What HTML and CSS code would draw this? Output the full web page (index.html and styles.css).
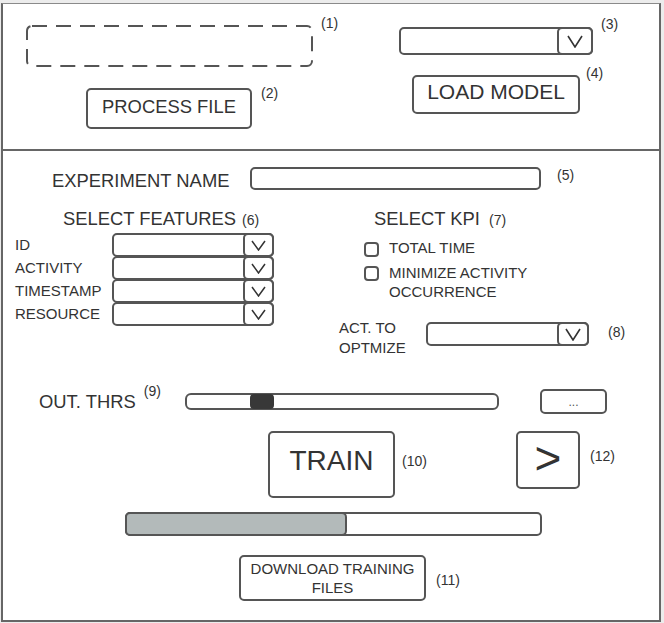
FILE: index.html
```html
<!DOCTYPE html>
<html lang="en">
<head>
  <meta charset="UTF-8">
  <meta name="viewport" content="width=device-width, initial-scale=1.0">
  <title>Training Wireframe</title>
  <link rel="stylesheet" href="styles.css">
</head>
<body>
  <div class="frame">

    <!-- file / model loading -->
    <section class="top">
      <div class="col-file">
        <div class="line">
          <svg class="drop" width="287" height="42" viewBox="0 0 287 42">
            <rect x="1" y="1" width="285" height="40" rx="5" fill="none" stroke="#555" stroke-width="2" stroke-dasharray="15 9"/>
          </svg>
          <span class="note n1">(1)</span>
        </div>
        <div class="line process-line">
          <button class="btn btn-process">PROCESS FILE</button>
          <span class="note n2">(2)</span>
        </div>
      </div>
      <div class="col-model">
        <div class="line">
          <div class="select select-model">
            <span class="vbox"><svg width="16" height="13" viewBox="0 0 16 13"><polyline points="1,1 8,12 15,1" fill="none" stroke="#333" stroke-width="1.6"/></svg></span>
          </div>
          <span class="note n3">(3)</span>
        </div>
        <div class="line load-line">
          <button class="btn btn-load">LOAD MODEL</button>
          <span class="note n4">(4)</span>
        </div>
      </div>
    </section>

    <!-- experiment settings -->
    <section class="main">
      <div class="row exp-row">
        <span class="exp-label">EXPERIMENT NAME</span>
        <div class="field exp-field"></div>
        <span class="note n5">(5)</span>
      </div>

      <div class="row cols-row">
        <div class="col-features">
          <h2 class="heading features-heading">SELECT FEATURES<span class="note n6">(6)</span></h2>
          <div class="feature-list">
            <div class="feature">
              <span class="feature-label">ID</span>
              <div class="select select-feature"><span class="vbox vbox-sm"><svg width="15" height="11" viewBox="0 0 15 11"><polyline points="1,1 7.5,10 14,1" fill="none" stroke="#333" stroke-width="1.5"/></svg></span></div>
            </div>
            <div class="feature">
              <span class="feature-label">ACTIVITY</span>
              <div class="select select-feature"><span class="vbox vbox-sm"><svg width="15" height="11" viewBox="0 0 15 11"><polyline points="1,1 7.5,10 14,1" fill="none" stroke="#333" stroke-width="1.5"/></svg></span></div>
            </div>
            <div class="feature">
              <span class="feature-label">TIMESTAMP</span>
              <div class="select select-feature"><span class="vbox vbox-sm"><svg width="15" height="11" viewBox="0 0 15 11"><polyline points="1,1 7.5,10 14,1" fill="none" stroke="#333" stroke-width="1.5"/></svg></span></div>
            </div>
            <div class="feature">
              <span class="feature-label">RESOURCE</span>
              <div class="select select-feature"><span class="vbox vbox-sm"><svg width="15" height="11" viewBox="0 0 15 11"><polyline points="1,1 7.5,10 14,1" fill="none" stroke="#333" stroke-width="1.5"/></svg></span></div>
            </div>
          </div>
        </div>

        <div class="col-kpi">
          <h2 class="heading kpi-heading">SELECT KPI<span class="note n7">(7)</span></h2>
          <div class="kpi-list">
            <label class="option option-first">
              <span class="check"></span>
              <span class="option-text">TOTAL TIME</span>
            </label>
            <label class="option option-second">
              <span class="check"></span>
              <span class="option-text">MINIMIZE ACTIVITY<br>OCCURRENCE</span>
            </label>
          </div>
          <div class="act-row">
            <span class="act-label">ACT. TO<br>OPTMIZE</span>
            <div class="select select-act">
              <span class="vbox"><svg width="16" height="13" viewBox="0 0 16 13"><polyline points="1,1 8,12 15,1" fill="none" stroke="#333" stroke-width="1.6"/></svg></span>
            </div>
            <span class="note n8">(8)</span>
          </div>
        </div>
      </div>

      <div class="row slider-row">
        <div class="thrs">
          <span class="thrs-label">OUT. THRS</span>
          <span class="note n9">(9)</span>
        </div>
        <div class="track"><span class="thumb"></span></div>
        <button class="btn btn-more">...</button>
      </div>

      <div class="row train-row">
        <button class="btn btn-train">TRAIN</button>
        <div class="train-note"><span class="note n10">(10)</span></div>
        <button class="btn btn-next">&gt;</button>
        <span class="note n12">(12)</span>
      </div>

      <div class="progress">
        <div class="progress-fill" style="width: 222px;"></div>
      </div>

      <div class="row download-row">
        <button class="btn btn-download">DOWNLOAD TRAINING<br>FILES</button>
        <span class="note n11">(11)</span>
      </div>
    </section>

  </div>
</body>
</html>
```

FILE: styles.css
```css
body {
  margin: 0;
  background: #ececec;
  font-family: "Liberation Sans", Arial, sans-serif;
  color: #333;
}
.frame {
  margin: 3px 0 0 1px;
  width: 660px;
  box-sizing: border-box;
  background: #fff;
  border: 2px solid #666;
  border-top: 1px solid #8a8a8a;
}
.note {
  font-size: 14px;
  line-height: 16px;
  color: #333;
  white-space: nowrap;
}
.line, .row {
  display: flex;
  align-items: flex-start;
}
.btn {
  box-sizing: border-box;
  padding: 0;
  background: #fff;
  border: 2px solid #555;
  border-radius: 5px;
  color: #333;
  font-family: inherit;
  cursor: pointer;
}
.select, .field {
  box-sizing: border-box;
  border: 2px solid #555;
  border-radius: 5px;
  background: #fff;
}
.select {
  display: flex;
  justify-content: flex-end;
}
.vbox {
  display: flex;
  align-items: center;
  justify-content: center;
  margin: -2px -2px -2px 0;
  border: 2px solid #555;
  border-radius: 5px;
}

/* top block */
.top {
  display: flex;
  height: 147px;
  box-sizing: border-box;
  padding: 21px 0 0 23px;
  border-bottom: 2px solid #666;
}
.col-file {
  width: 373px;
}
.drop {
  display: block;
}
.n1 { margin: -10px 0 0 8px; }
.process-line {
  margin: 21px 0 0 60px;
}
.btn-process {
  width: 166px;
  height: 41px;
  font-size: 18.4px;
  padding-bottom: 3px;
}
.n2 { margin: -3px 0 0 9px; }
.col-model {
  padding-top: 2px;
}
.select-model {
  width: 194px;
  height: 28px;
}
.select-model .vbox { width: 32px; }
.n3 { margin: -11px 0 0 8px; }
.load-line {
  margin: 20px 0 0 13px;
}
.btn-load {
  width: 168px;
  height: 39px;
  font-size: 21px;
  padding-bottom: 6px;
}
.n4 { margin: -10px 0 0 6px; }

/* main block */
.main {
  height: 469px;
  box-sizing: border-box;
  padding-top: 16px;
}
.exp-row {
  height: 23px;
}
.exp-label {
  width: 198px;
  margin: 3px 0 0 49px;
  font-size: 18.4px;
  line-height: 22px;
}
.exp-field {
  width: 291px;
  height: 23px;
}
.n5 { margin-left: 16px; }

.cols-row {
  margin-top: 18px;
}
.heading {
  margin: 0;
  font-size: 18.4px;
  line-height: 22px;
  font-weight: normal;
}
.col-features {
  width: 336px;
}
.features-heading {
  margin-left: 60px;
}
.n6 { margin-left: 6px; }
.feature-list {
  margin-top: 3px;
}
.feature {
  display: flex;
  align-items: center;
}
.feature + .feature {
  margin-top: -1px;
}
.feature-label {
  width: 97px;
  margin-left: 12px;
  font-size: 15px;
  line-height: 18px;
}
.select-feature {
  width: 162px;
  height: 24px;
}
.vbox-sm { width: 27px; }

.kpi-heading {
  margin-left: 35px;
}
.n7 { margin-left: 9px; }
.kpi-list {
  padding-left: 25px;
}
.option {
  display: flex;
  align-items: flex-start;
}
.option-first { margin-top: 8px; }
.option-second { margin-top: 6px; }
.check {
  box-sizing: border-box;
  width: 15px;
  height: 15px;
  margin-top: 4px;
  border: 2px solid #555;
  border-radius: 4px;
}
.option-second .check { margin-top: 3px; }
.option-text {
  margin-left: 10px;
  font-size: 15px;
  line-height: 19px;
}
.act-row {
  display: flex;
  align-items: flex-start;
  margin-top: 17px;
}
.act-label {
  width: 87px;
  font-size: 15px;
  line-height: 20px;
}
.select-act {
  width: 163px;
  height: 24px;
  margin-top: 4px;
}
.select-act .vbox { width: 28px; }
.n8 { margin: 6px 0 0 19px; }

.slider-row {
  margin-top: 31px;
  height: 25px;
}
.thrs {
  display: flex;
  align-items: flex-start;
  width: 146px;
  margin-left: 36px;
}
.thrs-label {
  margin-top: 2px;
  font-size: 18.4px;
  line-height: 22px;
}
.n9 { margin: -6px 0 0 8px; }
.track {
  display: flex;
  align-items: center;
  box-sizing: border-box;
  width: 314px;
  height: 17px;
  margin-top: 4px;
  border: 2px solid #555;
  border-radius: 6px;
}
.thumb {
  width: 24px;
  height: 15px;
  margin-left: 63px;
  background: #383838;
  border-radius: 4px;
}
.btn-more {
  width: 67px;
  height: 25px;
  margin-left: 41px;
  font-size: 12px;
  color: #555;
}

.train-row {
  margin-top: 17px;
}
.btn-train {
  width: 127px;
  height: 67px;
  margin-left: 265px;
  font-size: 28px;
  padding-bottom: 7px;
}
.train-note {
  width: 121px;
  padding: 21px 0 0 7px;
  box-sizing: border-box;
}
.btn-next {
  width: 64px;
  height: 58px;
  font-size: 46px;
  line-height: 46px;
  padding-bottom: 4px;
}
.n12 { margin: 17px 0 0 10px; }

.progress {
  display: flex;
  box-sizing: border-box;
  width: 417px;
  height: 24px;
  margin: 14px 0 0 122px;
  border: 2px solid #555;
  border-radius: 5px;
}
.progress-fill {
  box-sizing: border-box;
  margin: -2px 0 -2px -2px;
  border: 2px solid #555;
  border-radius: 5px;
  background: #b3baba;
}

.download-row {
  margin-top: 19px;
}
.btn-download {
  width: 187px;
  height: 46px;
  margin-left: 236px;
  font-size: 15px;
  line-height: 19px;
}
.n11 { margin: 17px 0 0 10px; }
```
